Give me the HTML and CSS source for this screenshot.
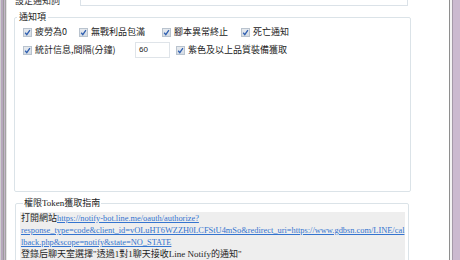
FILE: index.html
```html
<!DOCTYPE html>
<html lang="zh-Hant">
<head>
<meta charset="utf-8">
<link rel="stylesheet" href="styles.css">
</head>
<body>
<div class="window">
  <div class="frame-left"></div>
  <main class="content">
    <div class="top-row">
      <span class="top-label">設定通知詞</span>
      <div class="top-input"></div>
    </div>

    <fieldset class="group group-notify">
      <legend>通知項</legend>
      <div class="row row1">
        <label class="chk"><span class="box"><svg viewBox="0 0 9 9" width="9" height="9"><path d="M2.2 4.8 L3.8 6.6 L6.9 2.2" fill="none" stroke="#2f5fb0" stroke-width="1.3"/></svg></span>疲勞為0</label>
        <label class="chk"><span class="box"><svg viewBox="0 0 9 9" width="9" height="9"><path d="M2.2 4.8 L3.8 6.6 L6.9 2.2" fill="none" stroke="#2f5fb0" stroke-width="1.3"/></svg></span>無戰利品包滿</label>
        <label class="chk"><span class="box"><svg viewBox="0 0 9 9" width="9" height="9"><path d="M2.2 4.8 L3.8 6.6 L6.9 2.2" fill="none" stroke="#2f5fb0" stroke-width="1.3"/></svg></span>腳本異常終止</label>
        <label class="chk"><span class="box"><svg viewBox="0 0 9 9" width="9" height="9"><path d="M2.2 4.8 L3.8 6.6 L6.9 2.2" fill="none" stroke="#2f5fb0" stroke-width="1.3"/></svg></span>死亡通知</label>
      </div>
      <div class="row row2">
        <label class="chk chk-interval"><span class="box"><svg viewBox="0 0 9 9" width="9" height="9"><path d="M2.2 4.8 L3.8 6.6 L6.9 2.2" fill="none" stroke="#2f5fb0" stroke-width="1.3"/></svg></span>統計信息,間隔(分鐘)</label>
        <div class="num-input">60</div>
        <label class="chk"><span class="box"><svg viewBox="0 0 9 9" width="9" height="9"><path d="M2.2 4.8 L3.8 6.6 L6.9 2.2" fill="none" stroke="#2f5fb0" stroke-width="1.3"/></svg></span>紫色及以上品質裝備獲取</label>
      </div>
    </fieldset>

    <fieldset class="group group-guide">
      <legend>權限Token獲取指南</legend>
      <div class="guide">
        <p>打開網站<a class="link" href="#">https://notify-bot.line.me/oauth/authorize?<br>response_type=code&amp;client_id=vOLuHT6WZZH0LCFStU4mSo&amp;redirect_uri=https://www.gdbsn.com/LINE/cal<br>lback.php&amp;scope=notify&amp;state=NO_STATE</a></p>
        <p>登錄后聊天室選擇"透過1對1聊天接收Line Notify的通知"</p>
        <p>點擊確認後,在彈出頁面中複製Token</p>
      </div>
    </fieldset>
  </main>
  <div class="frame-right"></div>
</div>
</body>
</html>
```

FILE: styles.css
```css
html, body {
  margin: 0;
  padding: 0;
  background: #ffffff;
}

.window {
  display: flex;
  width: 460px;
  height: 260px;
  overflow: hidden;
  font-family: "Noto Sans CJK TC", "Liberation Sans", sans-serif;
  font-size: 9px;
  color: #222222;
}

.frame-left {
  width: 8px;
  flex: none;
  background: linear-gradient(to right,
    #cfcfcf 0, #cfcfcf 1px,
    #b7a8bd 1px, #b7a8bd 3px,
    #9c9c9c 3px, #9c9c9c 4px,
    #c4b6c8 4px, #c4b6c8 5px,
    #a3a3a3 5px, #a3a3a3 6px,
    #e4e4e4 6px, #e4e4e4 7px,
    #ffffff 7px);
}

.frame-right {
  width: 11px;
  flex: none;
  background: linear-gradient(to right,
    #8e8e8e 0, #8e8e8e 1px,
    #f4f4f4 1px, #f4f4f4 3px,
    #a59aa9 3px, #a59aa9 4px,
    #cbbad0 4px, #cbbad0 11px);
}

.content {
  flex: 1;
  min-width: 0;
  display: flex;
  flex-direction: column;
}

.top-row {
  display: flex;
  align-items: flex-end;
  flex: none;
  height: 20px;
  margin-top: -14px;
  padding-left: 7px;
}

.top-label {
  width: 65px;
  line-height: 11px;
  color: #333333;
}

.top-input {
  width: 328px;
  height: 20px;
  box-sizing: border-box;
  border: 1px solid #dbe2e8;
  background: #ffffff;
}

.group {
  margin: 0;
  padding: 0;
  border: 1px solid #dbe3e8;
  border-radius: 2px;
  box-sizing: border-box;
  min-width: 0;
  flex: none;
}

.group legend {
  padding: 0 2px;
  margin-left: 2px;
  line-height: 10px;
}

.group-notify {
  margin-top: 6px;
  margin-left: 6px;
  width: 397px;
  height: 180px;
}

.row {
  display: flex;
  align-items: center;
  padding-left: 8px;
}

.row1 {
  margin-top: 4px;
  height: 12px;
}

.row2 {
  margin-top: 4px;
  height: 16px;
}

.chk {
  display: flex;
  align-items: center;
  gap: 3px;
  line-height: 12px;
  white-space: nowrap;
}

.row1 .chk:nth-child(1) { width: 56px; }
.row1 .chk:nth-child(2) { width: 83px; }
.row1 .chk:nth-child(3) { width: 79px; }

.chk-interval { width: 112px; }

.box {
  width: 9px;
  height: 9px;
  flex: none;
  box-sizing: border-box;
  border: 1px solid #b9c3ce;
  background: linear-gradient(#e6eaef, #d5dce4);
  display: flex;
}

.box svg {
  display: block;
  margin: -1px;
}

.num-input {
  width: 35px;
  height: 16px;
  box-sizing: border-box;
  border: 1px solid #dfe4e9;
  padding-left: 3px;
  line-height: 14px;
  font-family: "Liberation Sans", sans-serif;
  font-size: 8px;
  margin-right: 6px;
}

.group-guide {
  margin-top: 6px;
  margin-left: 7px;
  width: 394px;
  height: 80px;
  padding: 0 3px 0 4px;
}

.group-guide legend {
  font-family: "Liberation Serif", "Noto Sans CJK TC", serif;
  margin-left: 3px;
  padding: 0 1px;
}

.guide {
  margin-top: 4px;
  background: #eeeeee;
  padding-left: 1px;
  font-family: "Liberation Serif", "Noto Sans CJK TC", serif;
  font-size: 9px;
  line-height: 12px;
  color: #1e1e1e;
  height: 60px;
}

.guide p {
  margin: 0;
}

.link {
  color: #3474cf;
  text-decoration: underline;
  white-space: nowrap;
  font-size: 8.4px;
  line-height: 1;
}
```
